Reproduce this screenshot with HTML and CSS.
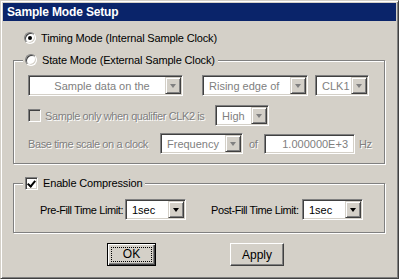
FILE: index.html
```html
<!DOCTYPE html>
<html lang="en">
<head>
  <meta charset="UTF-8" />
  <title>Sample Mode Setup</title>
  <link rel="stylesheet" href="styles.css">
</head>
<body>

  <div class="window">
    <div class="titlebar">Sample Mode Setup</div>

    <div class="dlg">
      <div class="opt-row">
        <span class="radio checked"></span>
        <span>Timing Mode (Internal Sample Clock)</span>
      </div>

      <fieldset class="group group-state">
        <legend><span class="radio"></span><span>State Mode (External Sample Clock)</span></legend>

        <div class="row row-1">
          <div class="combo off w-sample"><span class="combo-text center">Sample data on the</span><span class="combo-btn"></span></div>
          <div class="combo off w-edge"><span class="combo-text">Rising edge of</span><span class="combo-btn"></span></div>
          <div class="combo off w-clk"><span class="combo-text">CLK1</span><span class="combo-btn"></span></div>
        </div>

        <div class="row row-2">
          <span class="check off"></span>
          <span class="lbl off lbl-qual">Sample only when qualifier CLK2 is</span>
          <div class="combo off w-high"><span class="combo-text">High</span><span class="combo-btn"></span></div>
        </div>

        <div class="row row-3">
          <span class="lbl off lbl-base">Base time scale on a clock</span>
          <div class="combo off w-freq"><span class="combo-text">Frequency</span><span class="combo-btn"></span></div>
          <span class="lbl off lbl-of">of</span>
          <div class="edit off">1.000000E+3</div>
          <span class="lbl off lbl-hz">Hz</span>
        </div>
      </fieldset>

      <fieldset class="group group-comp">
        <legend><span class="check checked"></span><span>Enable Compression</span></legend>
        <div class="row row-fill">
          <span class="lbl lbl-pre">Pre-Fill Time Limit:</span>
          <div class="combo w-sec"><span class="combo-text">1sec</span><span class="combo-btn"></span></div>
          <span class="lbl lbl-post">Post-Fill Time Limit:</span>
          <div class="combo w-sec"><span class="combo-text">1sec</span><span class="combo-btn"></span></div>
        </div>
      </fieldset>

      <div class="buttons">
        <button class="btn default btn-ok"><span class="focus">OK</span></button>
        <button class="btn btn-apply">Apply</button>
      </div>
    </div>
  </div>

</body>
</html>
```

FILE: styles.css
```css
* {
  box-sizing: border-box;
}
body {
  margin: 0;
  padding: 0;
  background: #d4d0c8;
  font-family: 'Liberation Sans', Arial, sans-serif;
  font-size: 11px;
  color: #000;
}
.window {
  width: 399px;
  height: 279px;
  background: #d4d0c8;
  border: 1px solid;
  border-color: #d4d0c8 #404040 #404040 #d4d0c8;
  box-shadow: inset 1px 1px 0 #fff, inset -1px -1px 0 #808080;
  padding: 2px;
}
.titlebar {
  height: 18px;
  background: #0a246a;
  color: #fff;
  font-weight: bold;
  font-size: 12px;
  letter-spacing: -0.15px;
  line-height: 18px;
  padding-left: 4px;
}
.dlg {
  padding: 10px 10px 0 10px;
}

/* radio + checkbox */
.opt-row {
  display: flex;
  align-items: center;
  height: 14px;
  padding-left: 11px;
  letter-spacing: -0.15px;
}
.radio {
  display: inline-block;
  position: relative;
  width: 12px;
  height: 12px;
  border-radius: 50%;
  background: #fff;
  border: 1px solid;
  border-color: #808080 #fff #fff #808080;
  box-shadow: inset 1px 1px 0 #404040, inset -1px -1px 0 #d4d0c8;
  margin-right: 5px;
  flex: none;
}
.radio.checked::after {
  content: "";
  position: absolute;
  left: 3px;
  top: 3px;
  width: 4px;
  height: 4px;
  border-radius: 50%;
  background: #000;
}
.check {
  display: inline-block;
  position: relative;
  width: 13px;
  height: 13px;
  background: #fff;
  border: 1px solid;
  border-color: #808080 #fff #fff #808080;
  box-shadow: inset 1px 1px 0 #404040, inset -1px -1px 0 #d4d0c8;
  flex: none;
}
.check.off {
  background: #d4d0c8;
}
.check.checked::after {
  content: "";
  position: absolute;
  left: 3px;
  top: 1px;
  width: 3px;
  height: 6px;
  border: solid #000;
  border-width: 0 2px 2px 0;
  transform: rotate(40deg);
}

/* group boxes */
.group {
  margin: 8px 0 0 0;
  padding: 0;
  border: 1px solid #808080;
  box-shadow: 1px 1px 0 #fff, inset 1px 1px 0 #fff;
  min-width: 0;
  width: 372px;
}
.group legend {
  display: flex;
  align-items: center;
  height: 14px;
  margin-left: 9px;
  padding: 0 3px 0 2px;
  background: #d4d0c8;
  letter-spacing: -0.15px;
}
.group-state {
  height: 111px;
}
.group-comp {
  margin-top: 12px;
  height: 57px;
}
.group-comp legend .check {
  margin-right: 5px;
}

/* rows */
.row {
  display: flex;
  align-items: center;
  padding-left: 14px;
}
.row-1 {
  margin-top: 8px;
}
.row-2 {
  margin-top: 9px;
}
.row-3 {
  margin-top: 7px;
}
.row-fill {
  margin-top: 9px;
  padding-left: 26px;
}

.lbl {
  white-space: nowrap;
  letter-spacing: -0.4px;
  flex: none;
}
.lbl.off {
  color: #808080;
  text-shadow: 1px 1px 0 #fff;
}
.combo.off .combo-text, .edit.off {
  color: #808080;
}
.lbl-qual {
  width: 170px;
  margin-left: 4px;
}
.lbl-base {
  width: 132px;
}
.lbl-of {
  width: 21px;
  padding-left: 6px;
}
.lbl-hz {
  margin-left: 4px;
}
.lbl-pre {
  width: 85px;
}
.lbl-post {
  width: 116px;
  padding-left: 25px;
}

/* combo boxes */
.combo {
  display: flex;
  height: 21px;
  background: #fff;
  border: 1px solid;
  border-color: #808080 #fff #fff #808080;
  box-shadow: inset 1px 1px 0 #404040, inset -1px -1px 0 #d4d0c8;
  padding: 2px;
  flex: none;
}
.combo-text {
  flex: 1;
  line-height: 16px;
  padding-left: 4px;
  white-space: nowrap;
  overflow: hidden;
}
.combo-text.center {
  text-align: center;
  padding-left: 8px;
}
.combo-btn {
  position: relative;
  width: 16px;
  height: 17px;
  margin: -1px -1px 0 0;
  background: #d4d0c8;
  border: 1px solid;
  border-color: #d4d0c8 #404040 #404040 #d4d0c8;
  box-shadow: inset 1px 1px 0 #fff, inset -1px -1px 0 #808080;
}
.combo-btn::after {
  content: "";
  position: absolute;
  left: 4px;
  top: 6px;
  border-left: 3.5px solid transparent;
  border-right: 3.5px solid transparent;
  border-top: 4px solid #000;
}
.combo.off .combo-btn::after {
  border-top-color: #808080;
}
.w-sample { width: 155px; }
.w-edge { width: 106px; margin-left: 19px; }
.w-clk { width: 54px; margin-left: 7px; }
.w-high { width: 54px; }
.w-freq { width: 83px; }
.w-sec { width: 61px; }

.edit {
  width: 91px;
  height: 20px;
  background: #fff;
  border: 1px solid;
  border-color: #808080 #fff #fff #808080;
  box-shadow: inset 1px 1px 0 #404040, inset -1px -1px 0 #d4d0c8;
  text-align: right;
  padding-right: 6px;
  line-height: 18px;
}

/* buttons */
.buttons {
  display: flex;
  margin-top: 10px;
  padding-left: 94px;
}
.btn {
  height: 23px;
  font-family: inherit;
  font-size: 12px;
  background: #d4d0c8;
  border: 1px solid;
  border-color: #fff #404040 #404040 #fff;
  box-shadow: inset -1px -1px 0 #808080;
  padding: 0;
}
.btn.default {
  border-color: #000;
  box-shadow: inset 1px 1px 0 #fff, inset -1px -1px 0 #404040, inset -2px -2px 0 #808080;
}
.btn-ok {
  width: 49px;
  padding: 3px;
}
.btn-ok .focus {
  display: block;
  height: 15px;
  line-height: 13px;
  border: 1px dotted #000;
}
.btn-apply {
  width: 54px;
  margin-left: 74px;
}
```
